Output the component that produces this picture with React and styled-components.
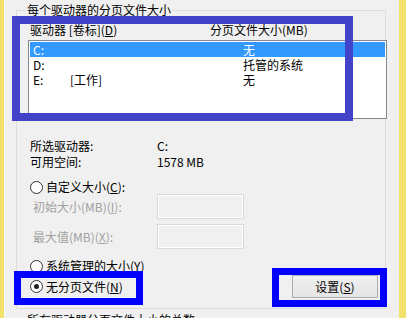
import styled, { createGlobalStyle } from 'styled-components';

const GlobalStyle = createGlobalStyle`
  html, body {
    margin: 0;
    padding: 0;
    background: #f0f0f0;
  }
  body {
    font-family: "Noto Sans CJK SC", "Noto Sans", sans-serif;
    font-size: 12px;
    color: #000;
  }
`;

const Page = styled.div`
  position: relative;
  display: flex;
  width: 406px;
  height: 318px;
  overflow: hidden;
  background: #f0f0f0;
`;

// 양쪽 노란 테두리
const Strip = styled.div`
  flex: none;
  width: ${(props) => props.$w}px;
  background: #f2e26b;
  border-right: ${(props) => (props.$edge ? '1px solid #fafafa' : 'none')};
`;

const Main = styled.div`
  flex: 1;
  min-width: 0;
  padding: 0 13px 0 11px;
`;

const Group = styled.fieldset`
  margin: ${(props) => props.$top}px 0 0;
  padding: 0 0 10px;
  min-width: 0;
  border: 1px solid #dcdcdc;
`;

const Legend = styled.legend`
  margin-left: 8px;
  padding: 0 2px;
  line-height: 14px;
`;

const Header = styled.div`
  display: grid;
  grid-template-columns: 180px 1fr;
  margin-top: 6px;
  padding-left: 13px;
  line-height: 14px;
`;

const ListBox = styled.div`
  box-sizing: border-box;
  width: 359px;
  height: 79px;
  margin: 3px 0 0 11px;
  padding: 1px;
  border: 1px solid #828790;
  background: #fff;
`;

const Row = styled.div`
  display: grid;
  grid-template-columns: 37px 173px 1fr;
  height: 15px;
  padding-left: 3px;
  line-height: 15px;
  overflow: hidden;
  color: ${(props) => (props.$selected ? '#fff' : '#000')};
  background: ${(props) => (props.$selected ? '#3399ff' : 'transparent')};
`;

const Info = styled.div`
  display: grid;
  grid-template-columns: 127px 1fr;
  margin-top: 19px;
  padding-left: 13px;
  line-height: 16px;
`;

const RadioRow = styled.label`
  display: flex;
  align-items: center;
  gap: 3px;
  margin-top: ${(props) => props.$top || 0}px;
  padding-left: 13px;
  line-height: 14px;
`;

const Circle = styled.span`
  box-sizing: border-box;
  display: flex;
  align-items: center;
  justify-content: center;
  width: 13px;
  height: 13px;
  border: 1px solid #333;
  border-radius: 50%;
  background: #fff;

  &::after {
    content: '';
    display: ${(props) => (props.$checked ? 'block' : 'none')};
    width: 5px;
    height: 5px;
    border-radius: 50%;
    background: #222;
  }
`;

const FieldRow = styled.div`
  display: flex;
  align-items: center;
  margin-top: ${(props) => props.$top || 0}px;
  padding-left: 16px;
`;

const FieldLabel = styled.span`
  width: 124px;
  color: #a0a0a0;
  line-height: 14px;
`;

const Field = styled.div`
  box-sizing: border-box;
  width: 87px;
  height: 25px;
  border: 1px solid #d9d9d9;
  box-shadow: inset 0 0 0 1px #fff;
  background: #f0f0f0;
`;

const BottomRow = styled.div`
  display: flex;
  align-items: center;
  justify-content: space-between;
  margin-top: 2px;
  padding-right: 7px;
`;

const Button = styled.button`
  box-sizing: border-box;
  width: 86px;
  height: 23px;
  padding: 0;
  border: 1px solid #adadad;
  background: linear-gradient(#f0f0f0, #e5e5e5);
  font-family: inherit;
  font-size: 12px;
  line-height: 14px;
  color: #000;
`;

// 파란 강조 박스 (스크린샷 위 주석)
const Highlight = styled.div`
  position: absolute;
  box-sizing: border-box;
  left: ${(props) => props.$x}px;
  top: ${(props) => props.$y}px;
  width: ${(props) => props.$w}px;
  height: ${(props) => props.$h}px;
  border: ${(props) => props.$t}px solid ${(props) => props.$c};
  pointer-events: none;
`;

const drives = [
  { id: 0, name: 'C:', label: '', size: '无' },
  { id: 1, name: 'D:', label: '', size: '托管的系统' },
  { id: 2, name: 'E:', label: '[工作]', size: '无' },
];

const App = () => {
  return (
    <>
      <GlobalStyle />
      <Page>
        <Strip $w={4} $edge />
        <Main>
          <Group $top={3}>
            <Legend>每个驱动器的分页文件大小</Legend>
            <Header>
              <span>驱动器 [卷标](<u>D</u>)</span>
              <span>分页文件大小(MB)</span>
            </Header>
            <ListBox>
              {drives.map((item) => (
                <Row key={item.id} $selected={item.id === 0}>
                  <span>{item.name}</span>
                  <span>{item.label}</span>
                  <span>{item.size}</span>
                </Row>
              ))}
            </ListBox>
            <Info>
              <span>所选驱动器:</span>
              <span>C:</span>
              <span>可用空间:</span>
              <span>1578 MB</span>
            </Info>
            <RadioRow $top={10}>
              <Circle />
              <span>自定义大小(<u>C</u>):</span>
            </RadioRow>
            <FieldRow>
              <FieldLabel>初始大小(MB)(<u>I</u>):</FieldLabel>
              <Field />
            </FieldRow>
            <FieldRow $top={5}>
              <FieldLabel>最大值(MB)(<u>X</u>):</FieldLabel>
              <Field />
            </FieldRow>
            <RadioRow $top={10}>
              <Circle />
              <span>系统管理的大小(<u>Y</u>)</span>
            </RadioRow>
            <BottomRow>
              <RadioRow>
                <Circle $checked />
                <span>无分页文件(<u>N</u>)</span>
              </RadioRow>
              <Button>设置(<u>S</u>)</Button>
            </BottomRow>
          </Group>
          <Group $top={4}>
            <Legend>所有驱动器分页文件大小的总数</Legend>
          </Group>
        </Main>
        <Strip $w={7} />
        <Highlight $x={12} $y={16} $w={341} $h={105} $t={8} $c='#4343c9' />
        <Highlight $x={14} $y={271} $w={129} $h={34} $t={7} $c='#0000ff' />
        <Highlight $x={272} $y={268} $w={115} $h={39} $t={7} $c='#0000ff' />
      </Page>
    </>
  );
};

export default App;
